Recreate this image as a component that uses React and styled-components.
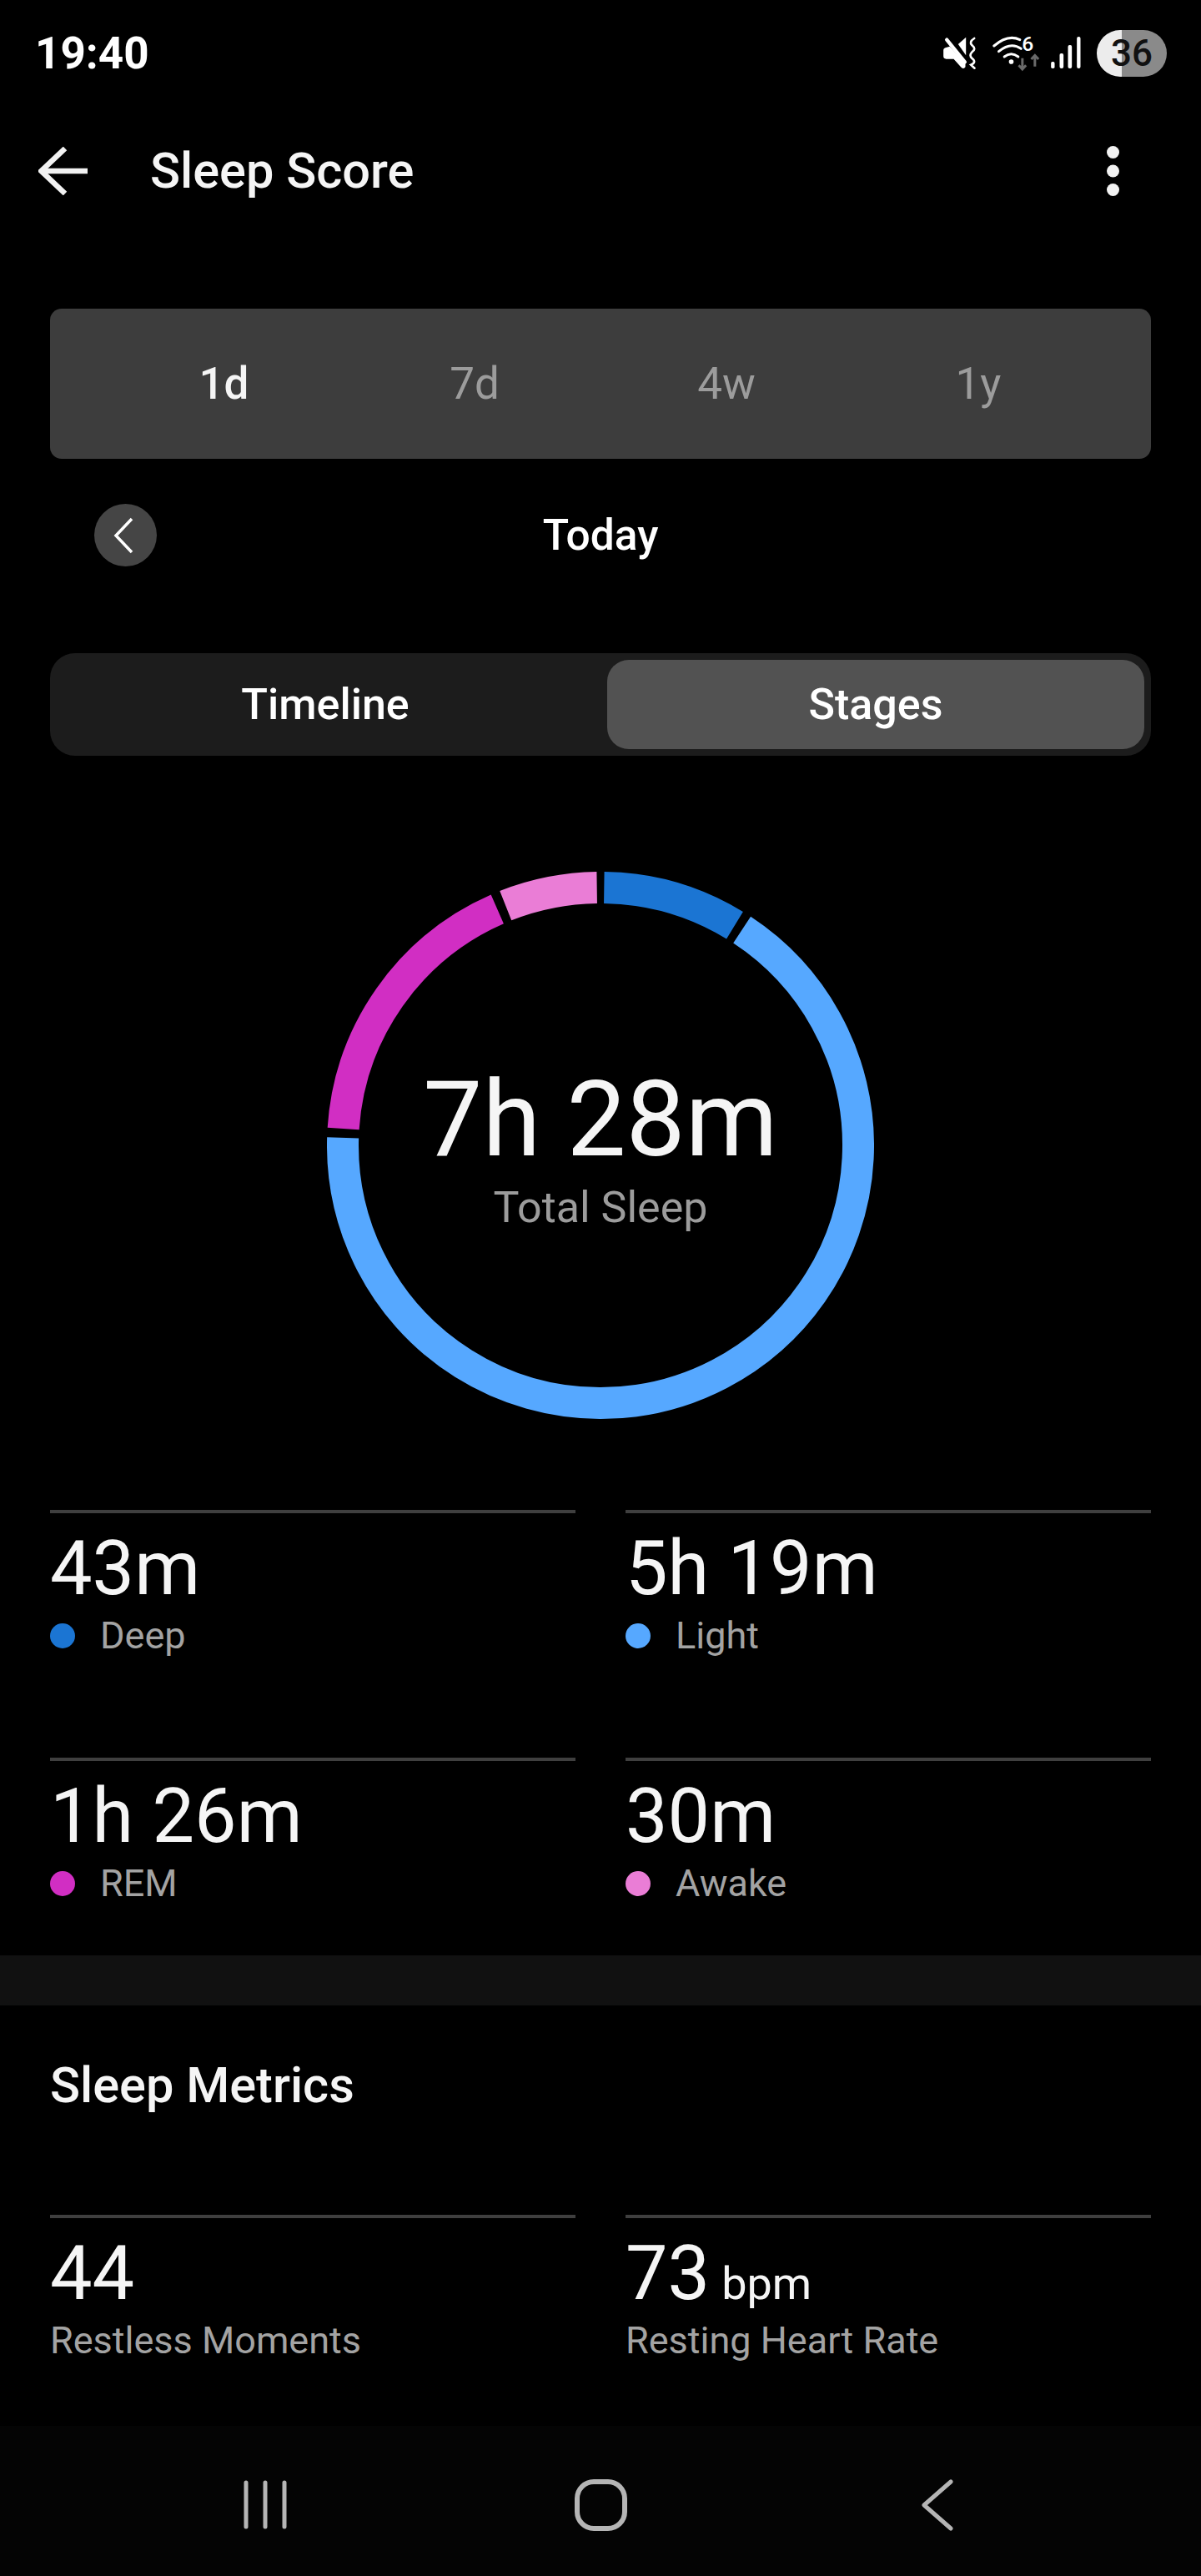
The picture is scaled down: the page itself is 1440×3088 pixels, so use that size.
import React from 'react';
import styled, { createGlobalStyle } from 'styled-components';

const GlobalStyle = createGlobalStyle`
  html, body { margin: 0; padding: 0; background: #000; }
  * { box-sizing: border-box; }
`;

const Page = styled.div`
  width: 1440px;
  height: 3088px;
  background: #000;
  color: #f5f5f5;
  font-family: Roboto, "Liberation Sans", sans-serif;
  display: flex;
  flex-direction: column;
  overflow: hidden;
`;

const StatusBar = styled.div`
  height: 145px;
  padding: 32px 41px 49px 42px;
  display: flex;
  align-items: center;
  justify-content: space-between;
`;
const Clock = styled.div`
  font-size: 53px;
  line-height: 64px;
  font-weight: 700;
  color: #fff;
  letter-spacing: 0;
`;
const StatusRight = styled.div`
  display: flex;
  align-items: center;
  gap: 18px;
`;
const Battery = styled.div`
  width: 84px;
  height: 56px;
  border-radius: 28px;
  background: linear-gradient(90deg, #ececec 0 36%, #8a8a8a 36% 100%);
  color: #111;
  font-size: 44px;
  line-height: 56px;
  font-weight: 500;
  text-align: center;
`;

const Header = styled.div`
  height: 120px;
  padding: 0 98px 0 46px;
  display: flex;
  align-items: center;
  gap: 75px;
`;
const Title = styled.div`
  flex: 1;
  font-size: 59.5px;
  line-height: 72px;
  font-weight: 500;
  color: #f5f5f5;
`;

const Content = styled.div`
  padding: 0 60px;
  display: flex;
  flex-direction: column;
`;
const RangeTabs = styled.div`
  margin-top: 105px;
  height: 180px;
  background: #3d3d3d;
  border-radius: 14px;
  padding: 0 56px;
  display: grid;
  grid-template-columns: repeat(4, 1fr);
  align-items: center;
`;
const RangeTab = styled.div`
  text-align: center;
  font-size: 53px;
  line-height: 60px;
  font-weight: ${p => (p.$active ? 500 : 400)};
  padding-left: ${p => (p.$active ? 3 : 0)}px;
  color: ${p => (p.$active ? '#f5f5f5' : '#9c9c9c')};
`;
const DateRow = styled.div`
  margin-top: 54px;
  height: 75px;
  padding-left: 53px;
  display: flex;
  align-items: center;
  position: relative;
`;
const RoundButton = styled.div`
  width: 75px;
  height: 75px;
  border-radius: 50%;
  background: #454545;
  display: flex;
  align-items: center;
  justify-content: center;
  padding-right: 5px;
`;
const DateLabel = styled.div`
  position: absolute;
  left: 0;
  right: 0;
  text-align: center;
  font-size: 51.5px;
  line-height: 60px;
  font-weight: 500;
  color: #fff;
`;
const ViewToggle = styled.div`
  margin-top: 104px;
  height: 123px;
  background: #1c1c1c;
  border-radius: 30px;
  padding: 8px;
  display: grid;
  grid-template-columns: 644px 644px;
  column-gap: 16px;
`;
const ViewOption = styled.div`
  border-radius: 26px;
  background: ${p => (p.$active ? '#525252' : 'transparent')};
  display: flex;
  align-items: center;
  justify-content: center;
  font-size: 52px;
  font-weight: 500;
  color: #fff;
`;

const RingWrap = styled.div`
  margin: 139px auto 0;
  width: 656px;
  height: 656px;
  position: relative;
`;
const RingCenter = styled.div`
  position: absolute;
  inset: 0;
  padding-top: 233px;
  display: flex;
  flex-direction: column;
  align-items: center;
`;
const RingValue = styled.div`
  font-size: 126.5px;
  line-height: 128px;
  font-weight: 400;
  color: #f5f5f5;
  white-space: nowrap;
`;
const RingLabel = styled.div`
  margin-top: 15px;
  font-size: 52px;
  line-height: 54px;
  color: #9c9c9c;
`;

const StatGrid = styled.div`
  margin-top: 109px;
  display: grid;
  grid-template-columns: 630px 630px;
  column-gap: 60px;
  grid-template-rows: ${p => p.$rows};
`;
const StatCell = styled.div`
  border-top: 4px solid #3f3f3f;
  padding-top: 22px;
`;
const StatValue = styled.div`
  font-size: 90px;
  line-height: 90px;
  color: #f5f5f5;
  white-space: nowrap;
`;
const StatUnit = styled.span`
  font-size: 54px;
  line-height: 0;
  margin-left: 14px;
`;
const StatLabel = styled.div`
  margin-top: 14px;
  font-size: 45px;
  line-height: 42px;
  color: #a3a3a3;
  display: flex;
  align-items: center;
  gap: 30px;
`;
const Dot = styled.span`
  width: 30px;
  height: 30px;
  border-radius: 50%;
  background: ${p => p.$color};
  flex: none;
`;
const Band = styled.div`
  height: 60px;
  background: #111;
`;
const SectionTitle = styled.div`
  margin-top: 67px;
  font-size: 59.5px;
  line-height: 58px;
  font-weight: 500;
  color: #f5f5f5;
`;
const MetricGrid = styled(StatGrid)`
  margin-top: 126px;
`;

const NavBar = styled.div`
  margin-top: auto;
  height: 180px;
  background: #040404;
  padding: 64px 0 0 292px;
  display: flex;
  align-items: flex-start;
  gap: 345px;
`;

const polar = (a, r = 309, c = 328) => {
  const t = (a * Math.PI) / 180;
  return [c + r * Math.sin(t), c - r * Math.cos(t)];
};
const arc = (from, to) => {
  const [x1, y1] = polar(from);
  const [x2, y2] = polar(to);
  const large = to - from > 180 ? 1 : 0;
  return `M${x1} ${y1}A309 309 0 ${large} 1 ${x2} ${y2}`;
};

const COLORS = { deep: '#1b75d3', light: '#56a8ff', rem: '#d12ec3', awake: '#ea7dd6' };
const SEGMENTS = [
  [0.8, 31.4, COLORS.deep],
  [33.3, 271.7, COLORS.light],
  [273.7, 336.4, COLORS.rem],
  [338.4, 359.2, COLORS.awake],
];

const Ring = () => (
  <svg width="656" height="656" viewBox="0 0 656 656" fill="none">
    {SEGMENTS.map(([a, b, c]) => (
      <path key={a} d={arc(a, b)} stroke={c} strokeWidth="38" />
    ))}
  </svg>
);

const StatusIcons = () => (
  <svg width="167" height="50" viewBox="150 120 500 150" fill="none">
    <path fill="#fff" d="M153 184Q153 176 162 174L176 170L232 232V244Q226 253 217 245L190 215H163Q153 215 153 205Z" />
    <path fill="#fff" d="M206 162L234 137V202Z" />
    <path stroke="#fff" strokeWidth="13" strokeLinecap="round" d="M165 146L230 226" />
    <path stroke="#fff" strokeWidth="8" strokeLinecap="round" d="M264 141C250 150 248 158 256 166C268 176 266 182 256 190C248 198 248 206 256 213C268 222 266 230 252 236L265 248" />
    <circle cx="397" cy="225" r="8.5" fill="#fff" />
    <path stroke="#fff" strokeWidth="9" strokeLinecap="round" d="M372 207Q397 188 422 207" />
    <path stroke="#fff" strokeWidth="9" strokeLinecap="round" d="M352 188Q395 152 432 178" />
    <path stroke="#fff" strokeWidth="9" strokeLinecap="round" d="M335 168Q385 125 428 146" />
    <text x="435" y="186" fill="#fff" fontFamily="Roboto, sans-serif" fontWeight="500" fontSize="74">6</text>
    <path stroke="#6a6a6a" strokeWidth="9" d="M437 212V250M424 238L437 252L450 238" />
    <path stroke="#6a6a6a" strokeWidth="9" d="M482 242V204M469 216L482 202L495 216" />
    <rect x="540" y="225" width="13" height="24" rx="5" fill="#fff" />
    <rect x="571" y="195" width="14" height="54" rx="6" fill="#fff" />
    <rect x="601" y="165" width="14" height="84" rx="6" fill="#fff" />
    <rect x="633" y="135" width="13" height="114" rx="6" fill="#fff" />
  </svg>
);

const BackArrow = () => (
  <svg width="59" height="58" viewBox="0 0 59 58" fill="none" stroke="#f2f2f2" strokeWidth="6.5">
    <path d="M3 29H59" />
    <path d="M32 2L3.5 29L32 56" />
  </svg>
);

const MoreDots = () => (
  <svg width="15" height="60" viewBox="0 0 15 60" fill="#f2f2f2">
    <circle cx="7.5" cy="7.5" r="7.5" />
    <circle cx="7.5" cy="30" r="7.5" />
    <circle cx="7.5" cy="52.5" r="7.5" />
  </svg>
);

const Chevron = () => (
  <svg width="24" height="44" viewBox="0 0 24 44" fill="none" stroke="#fff" strokeWidth="3.5">
    <path d="M22 2L3 22L22 42" />
  </svg>
);

const Recents = () => (
  <svg width="52" height="60" viewBox="0 0 52 60" stroke="#b5b5b5" strokeWidth="5" strokeLinecap="round">
    <path d="M3 4V57M26 4V57M49 4V57" />
  </svg>
);
const Home = () => (
  <svg width="63" height="62" viewBox="0 0 63 62" fill="none" stroke="#b5b5b5" strokeWidth="6">
    <rect x="3" y="3" width="57" height="56" rx="20" />
  </svg>
);
const NavBack = () => (
  <svg width="53" height="62" viewBox="0 0 53 62" fill="none" stroke="#b5b5b5" strokeWidth="5" strokeLinecap="round" strokeLinejoin="round">
    <path d="M43 3L11 31L43 59" />
  </svg>
);

const STAGES = [
  ['43m', 'Deep', COLORS.deep],
  ['5h 19m', 'Light', COLORS.light],
  ['1h 26m', 'REM', COLORS.rem],
  ['30m', 'Awake', COLORS.awake],
];

export default function App() {
  return (
    <Page>
      <GlobalStyle />
      <StatusBar>
        <Clock>19:40</Clock>
        <StatusRight>
          <StatusIcons />
          <Battery>36</Battery>
        </StatusRight>
      </StatusBar>
      <Header>
        <BackArrow />
        <Title>Sleep Score</Title>
        <MoreDots />
      </Header>
      <Content>
        <RangeTabs>
          <RangeTab $active>1d</RangeTab>
          <RangeTab>7d</RangeTab>
          <RangeTab>4w</RangeTab>
          <RangeTab>1y</RangeTab>
        </RangeTabs>
        <DateRow>
          <RoundButton><Chevron /></RoundButton>
          <DateLabel>Today</DateLabel>
        </DateRow>
        <ViewToggle>
          <ViewOption>Timeline</ViewOption>
          <ViewOption $active>Stages</ViewOption>
        </ViewToggle>
        <RingWrap>
          <Ring />
          <RingCenter>
            <RingValue>7h 28m</RingValue>
            <RingLabel>Total Sleep</RingLabel>
          </RingCenter>
        </RingWrap>
        <StatGrid $rows="297px 237px">
          {STAGES.map(([v, l, c]) => (
            <StatCell key={l}>
              <StatValue>{v}</StatValue>
              <StatLabel><Dot $color={c} />{l}</StatLabel>
            </StatCell>
          ))}
        </StatGrid>
      </Content>
      <Band />
      <Content>
        <SectionTitle>Sleep Metrics</SectionTitle>
        <MetricGrid $rows="200px">
          <StatCell>
            <StatValue>44</StatValue>
            <StatLabel>Restless Moments</StatLabel>
          </StatCell>
          <StatCell>
            <StatValue>73<StatUnit>bpm</StatUnit></StatValue>
            <StatLabel>Resting Heart Rate</StatLabel>
          </StatCell>
        </MetricGrid>
      </Content>
      <NavBar>
        <Recents />
        <Home />
        <NavBack />
      </NavBar>
    </Page>
  );
}
